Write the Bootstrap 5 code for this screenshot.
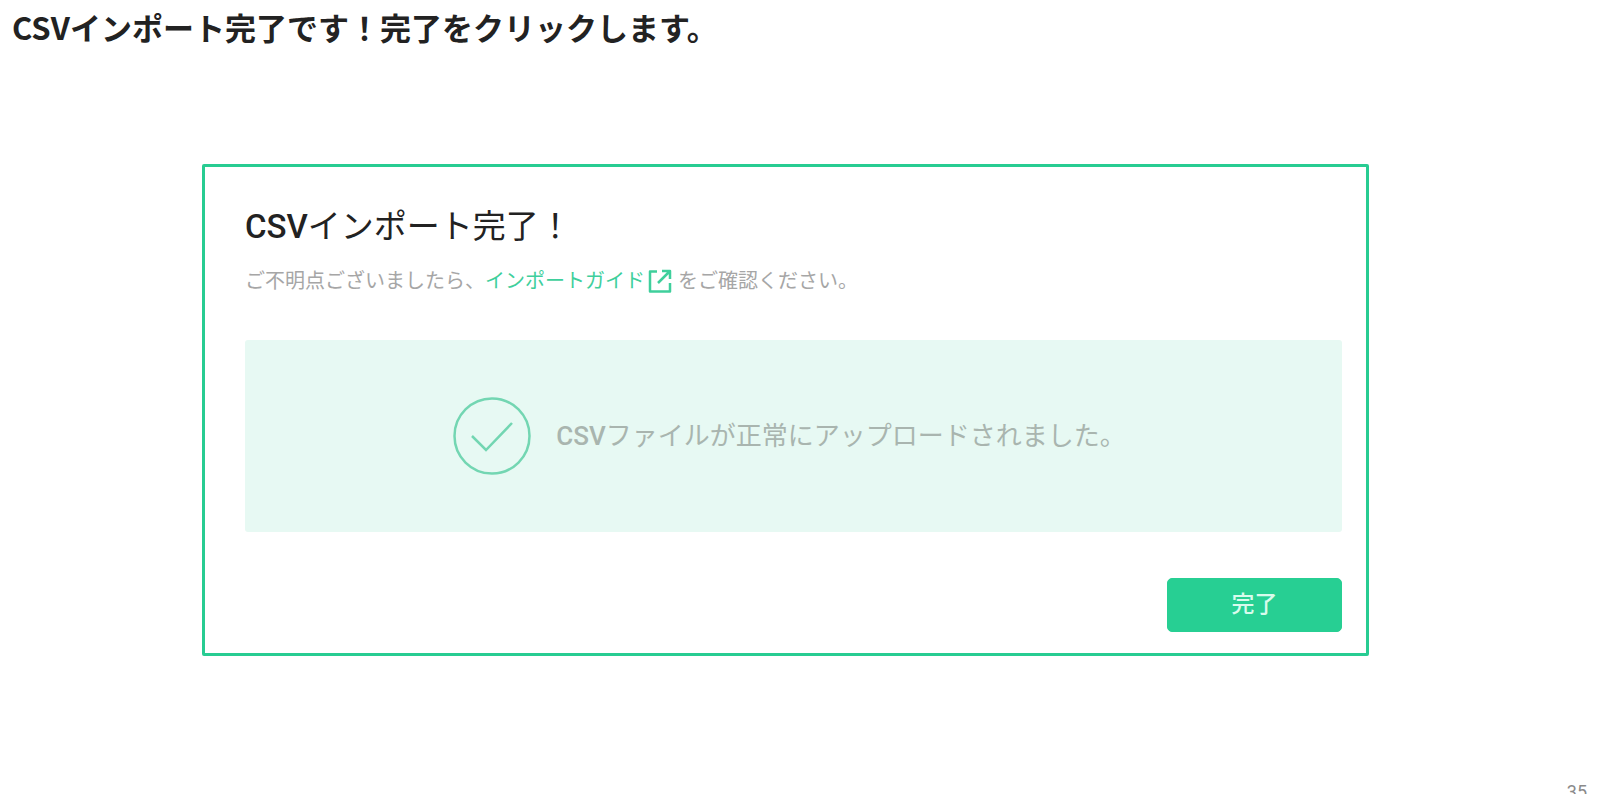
<!DOCTYPE html>
<html lang="ja">
<head>
<meta charset="utf-8">
<meta name="viewport" content="width=device-width, initial-scale=1">
<title>CSVインポート完了</title>
<link href="https://cdn.jsdelivr.net/npm/bootstrap@5.3.0/dist/css/bootstrap.min.css" rel="stylesheet">
<style>
  :root { --brand: #27cf93; }
  body { background: #fff; font-family: Roboto, "Noto Sans CJK JP", sans-serif; color: #222; }
  .slide-title { font: 700 31px/40px "Noto Sans CJK JP", sans-serif; padding: 7px 12px 0; }
  .stage { display: grid; grid-template-columns: 202fr 1167fr 231fr; padding-top: 117px; }
  .dialog-box { grid-column: 2; border: 3px solid #27cc92; border-radius: 2px; padding: 40px 24px 21px 40px; }
  .dialog-title { font-size: 33px; line-height: 40px; font-weight: 400; color: #222; }
  .latin { font-weight: 500; }
  .guide { font-size: 20px; line-height: 28px; margin-top: 20px; color: #a6a6a6; }
  .guide a { color: #3fcf9c; }
  .guide svg { width: 24px; height: 24px; margin: 0 6px 0 3px; }
  .result { margin-top: 45px; padding: 57px 24px 57px 16px; background: #e7f9f3; border-radius: 3px; gap: 25px; font-size: 26px; line-height: 40px; color: #a9b5af; }
  .result svg { width: 78px; height: 78px; flex: none; }
  .btn-done { --bs-btn-bg: var(--brand); --bs-btn-color: #d8fbec; --bs-btn-border-color: var(--brand); --bs-btn-hover-bg: #20b982; --bs-btn-hover-color: #fff; width: 175px; padding: 8px; margin-top: 46px; font-size: 23px; line-height: 36px; font-weight: 500; border-radius: 5px; }
  .page-number { font: 18px/20px Roboto, sans-serif; color: #8a8a8a; height: 12px; padding-right: 13px; margin-top: 126px; }
</style>
</head>
<body>
<header>
  <h1 class="slide-title m-0">CSVインポート完了です！完了をクリックします。</h1>
</header>
<main class="stage">
  <section class="dialog-box" aria-labelledby="dialog-title">
    <h2 class="dialog-title m-0" id="dialog-title"><span class="latin">CSV</span>インポート完了！</h2>
    <p class="guide d-flex flex-wrap align-items-center mb-0"><span>ご不明点ございましたら、</span><a class="d-flex align-items-center text-decoration-none" href="#guide">インポートガイド<svg viewBox="0 0 24 24" fill="none" stroke="currentColor" stroke-width="2.5" stroke-linejoin="round" aria-hidden="true"><path d="M9 2.5H2v20h20V14M14 2h8v8M22 2 10 14"/></svg></a><span>をご確認ください。</span></p>
    <div class="result d-flex justify-content-center align-items-center" role="status">
      <svg viewBox="0 0 78 78" fill="none" stroke="#73d6b2" stroke-width="2.5" aria-hidden="true"><circle cx="39" cy="39" r="37.5"/><path d="m19 39 14 14 26-27"/></svg>
      <span><span class="latin">CSV</span>ファイルが正常にアップロードされました。</span>
    </div>
    <div class="d-flex justify-content-end">
      <button type="button" class="btn btn-done">完了</button>
    </div>
  </section>
</main>
<footer class="page-number text-end overflow-hidden">35</footer>
<script src="https://cdn.jsdelivr.net/npm/bootstrap@5.3.0/dist/js/bootstrap.bundle.min.js"></script>
</body>
</html>
